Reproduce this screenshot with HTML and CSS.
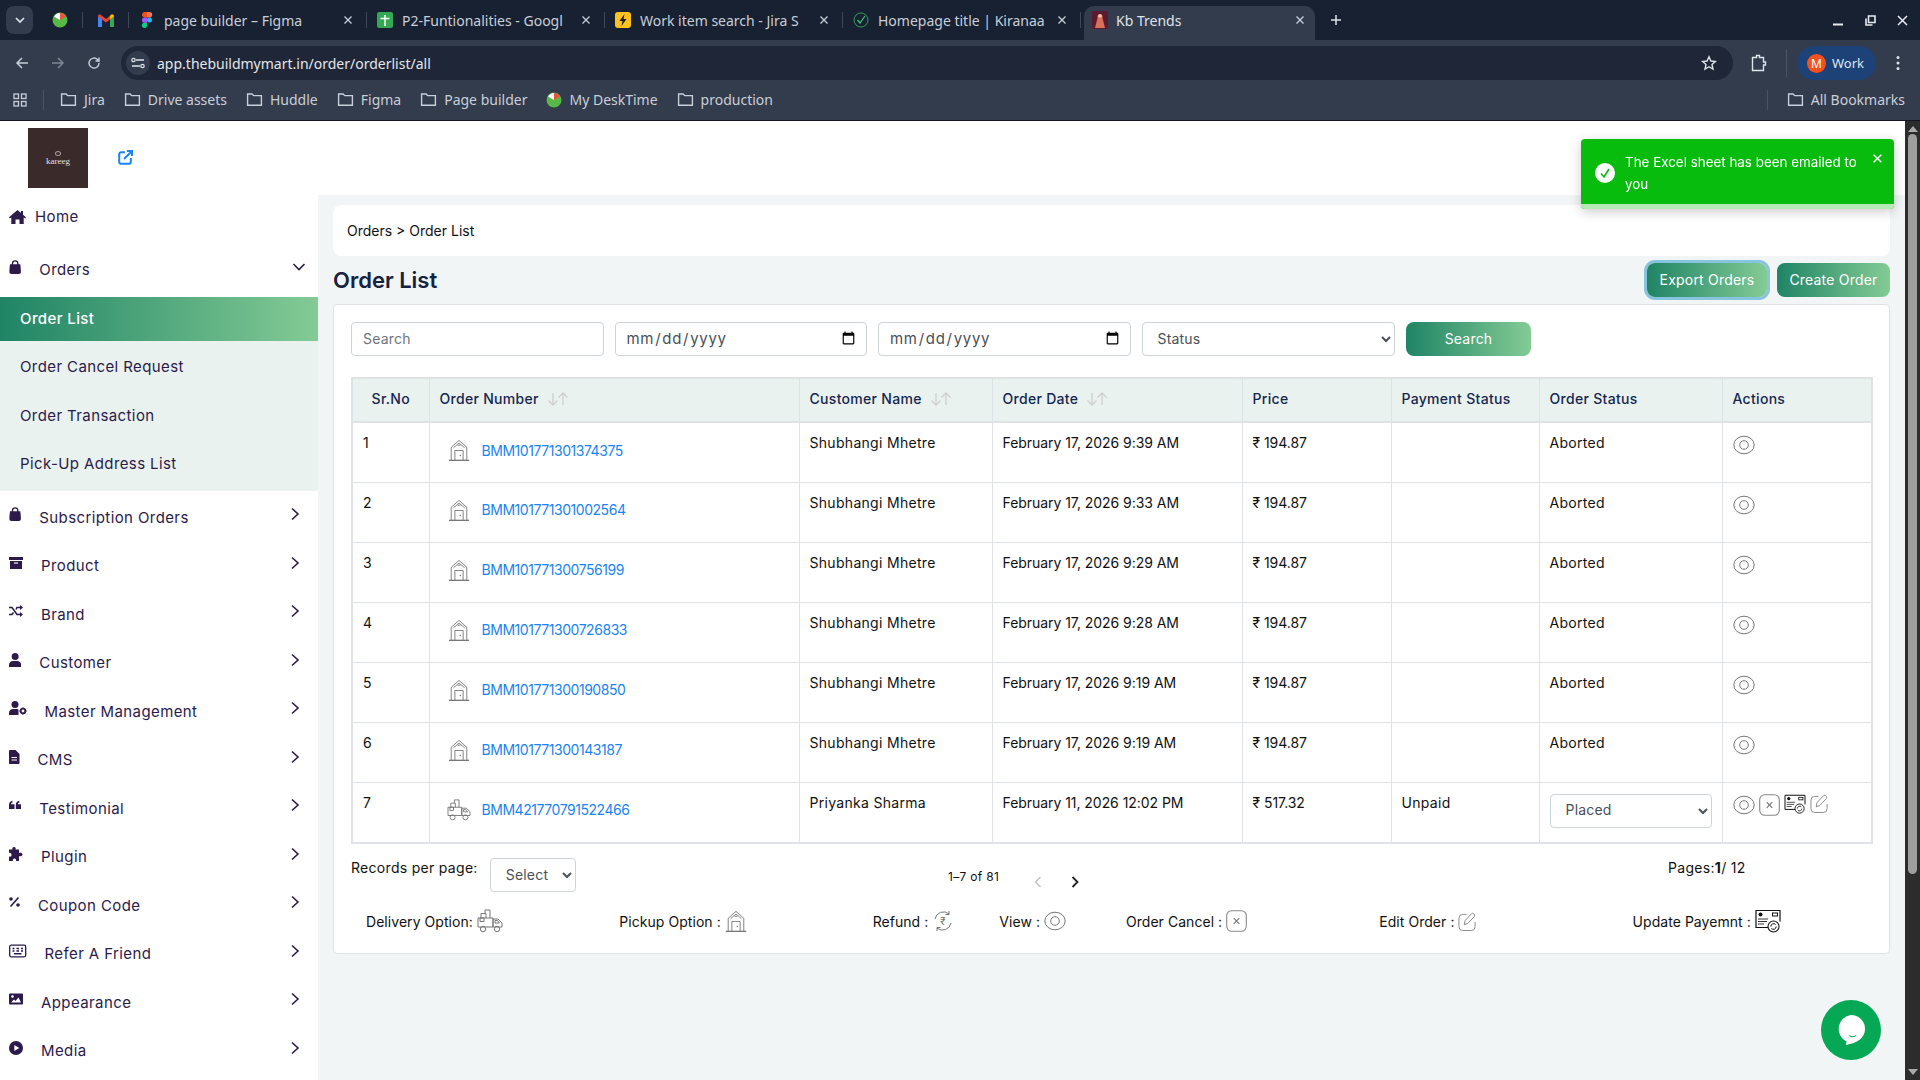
FILE: index.html
```html
<!DOCTYPE html>
<html>
<head>
    <meta charset="UTF-8">
    <title>Kb Trends</title>
    <link rel="stylesheet" href="styles.css">
</head>
<body>
    <!-- shared icons -->
    <svg class="icon-defs" xmlns="http://www.w3.org/2000/svg">
        <symbol id="i-folder" viewBox="0 0 16 16"><path d="M1.500 2.800h4.200l1.600 1.600h7.200v9h-13z" fill="none" stroke="currentColor" stroke-width="1.300"/></symbol>
        <symbol id="i-desktime" viewBox="0 0 16 16"><circle cx="8" cy="8" r="7.500" fill="#58b947"/><path d="M8 8V1a7 7 0 0 1 6 3.500z" fill="#e8553f"/><path d="M8 8V1a7 7 0 0 0-6 3.500z" fill="#fff"/></symbol>
        <symbol id="i-close" viewBox="0 0 10 10"><path d="M1.500 1.500l7 7M8.500 1.500l-7 7" stroke="currentColor" stroke-width="1.300" fill="none"/></symbol>
        <symbol id="i-right" viewBox="0 0 10 14"><path d="M2 1.500L8 7l-6 5.500" fill="none" stroke="currentColor" stroke-width="1.600"/></symbol>
        <symbol id="i-bag" viewBox="0 0 12.300 14"><path d="M3.500 5V3.500a2.650 2.650 0 0 1 5.300 0V5" fill="none" stroke="currentColor" stroke-width="1.300"/><path d="M1 4.300h10.300c.4 3 .6 5.500.6 7.700 0 1.300-.8 2-2 2H2.400c-1.200 0-2-.7-2-2 0-2.200.2-4.700.6-7.700z" fill="currentColor"/></symbol>
        <symbol id="i-house" viewBox="0 0 24 24"><g fill="none" stroke="#777" stroke-width="1"><path d="M3.500 23V9L12 1.500 20.500 9v14"/><path d="M6 9.500l6-5 6 5M10.500 6.800h3"/><path d="M7.500 23V12.500h9V23"/><path d="M1 23.300h22" stroke-width="1.500"/></g><circle cx="13.500" cy="18" r=".8" fill="#777"/></symbol>
        <symbol id="i-truck" viewBox="0 0 26 24"><g fill="none" stroke="#777" stroke-width="1"><path d="M1 9h15v9H1zM16 10h5l4 4v4h-9z"/><path d="M4 9V4.500h5V9M8 4.500V1h5v8M3 9h4v3.500H3z"/><path d="M18 11.500h2.500l2 2.500H18z"/><circle cx="6" cy="20" r="2.700"/><circle cx="20" cy="20" r="2.700"/></g></symbol>
        <symbol id="i-eye" viewBox="0 0 22 22"><ellipse cx="11" cy="11" rx="10.200" ry="8.800" fill="none" stroke="#777" stroke-width="1"/><circle cx="11" cy="11" r="4.300" fill="none" stroke="#777" stroke-width="1"/></symbol>
        <symbol id="i-cancel" viewBox="0 0 21 22"><rect x=".7" y=".7" width="19.600" height="20.600" rx="5" fill="none" stroke="#888" stroke-width="1.100"/><path d="M7.700 8.200l5.600 5.600M13.300 8.200l-5.600 5.600" stroke="#777" stroke-width="1.200"/></symbol>
        <symbol id="i-edit" viewBox="0 0 20 20"><path d="M9 2.500H5A4 4 0 0 0 1 6.500v9a4 4 0 0 0 4 4h9a4 4 0 0 0 4-4v-5" fill="none" stroke="#888" stroke-width="1"/><path d="M6.500 13.500l1-4.500 7-7.500c1-1 3.800 1.300 3 3l-7.200 7.500z" fill="none" stroke="#888" stroke-width="1"/></symbol>
        <symbol id="i-card" viewBox="0 0 26 24"><path d="M17 18.500H1V1.500h24v11" fill="none" stroke="#111" stroke-width="1.200"/><circle cx="5.500" cy="5.500" r="2" fill="#111"/><rect x="17.500" y="4" width="5" height="3" fill="none" stroke="#111"/><path d="M3 10h10M3 12.500h9M3 15h6" stroke="#333"/><circle cx="18.500" cy="17.500" r="5.500" fill="#fff" stroke="#111" stroke-width="1.100"/><path d="M15.800 17.500a2.800 2.800 0 0 1 4.800-2M21.200 17.500a2.800 2.800 0 0 1-4.800 2" fill="none" stroke="#111"/></symbol>
        <symbol id="i-sort" viewBox="0 0 22 14"><path d="M6 1v12M1.500 8.500L6 13l4.500-4.500M16 13V1M11.500 5.500L16 1l4.500 4.500" fill="none" stroke="#cfcfcf" stroke-width="1.300"/></symbol>
    </svg>

    <header class="tab-strip">
        <button class="tab-search"><svg width="10" height="7" viewBox="0 0 10 7"><path d="M1 1l4 4 4-4" fill="none" stroke="#dde1e8" stroke-width="1.700"/></svg></button>
        <div class="pinned-tab"><svg width="16" height="16"><use href="#i-desktime"/></svg></div>
        <div class="pinned-tab">
            <svg width="16" height="13" viewBox="0 0 16 13"><path d="M0 13V2l4 3v8z" fill="#4285f4"/><path d="M16 13V2l-4 3v8z" fill="#34a853"/><path d="M0 2.500C0 .5 2 0 3 1l5 4 5-4c1-1 3-.5 3 1.500L12 5.500 8 8.500 4 5.500z" fill="#ea4335"/><path d="M12 5.500l4-3C16 .5 14 0 13 1l-1 .8z" fill="#fbbc04"/></svg>
        </div>
        <div class="tab">
            <svg width="16" height="16" viewBox="-3 0 16 16"><circle cx="7.500" cy="8" r="2.500" fill="#1abcfe"/><path d="M2.500 16a2.500 2.500 0 0 0 2.500-2.500v-2.800H2.500a2.600 2.600 0 0 0 0 5.300z" fill="#0acf83"/><path d="M0 8a2.500 2.500 0 0 1 2.500-2.600H5v5.300H2.500A2.500 2.500 0 0 1 0 8z" fill="#a259ff"/><path d="M0 2.600A2.600 2.600 0 0 1 2.500 0H5v5.400H2.500A2.600 2.600 0 0 1 0 2.600z" fill="#f24e1e"/><path d="M5 0h2.500a2.700 2.700 0 0 1 0 5.400H5z" fill="#ff7262"/></svg>
            <span class="tab-title">page builder – Figma</span>
            <svg class="tab-close" width="10" height="10"><use href="#i-close"/></svg>
        </div>
        <div class="tab">
            <svg width="16" height="16" viewBox="0 0 16 16"><rect width="16" height="16" rx="2" fill="#34a853"/><path d="M8 3v11M3.500 6.500h9" stroke="#fff" stroke-width="1.500"/></svg>
            <span class="tab-title">P2-Funtionalities - Googl</span>
            <svg class="tab-close" width="10" height="10"><use href="#i-close"/></svg>
        </div>
        <div class="tab">
            <svg width="16" height="16" viewBox="0 0 16 16"><rect width="16" height="16" rx="3" fill="#fdc21c"/><path d="M9.500 2L4.500 9h3l-1 5 5-7h-3z" fill="#1c1c1c"/></svg>
            <span class="tab-title">Work item search - Jira S</span>
            <svg class="tab-close" width="10" height="10"><use href="#i-close"/></svg>
        </div>
        <div class="tab">
            <svg width="16" height="16" viewBox="0 0 16 16"><circle cx="8" cy="8" r="7" fill="none" stroke="#2f9e5d" stroke-width="1"/><path d="M4.500 8l2.500 3 5-7" fill="none" stroke="#46c07a" stroke-width="1.200"/></svg>
            <span class="tab-title">Homepage title | Kiranaa</span>
            <svg class="tab-close" width="10" height="10"><use href="#i-close"/></svg>
        </div>
        <div class="tab tab-active">
            <svg width="16" height="18" viewBox="0 0 16 18"><rect width="16" height="18" fill="#5a1a30"/><path d="M8 3c2 0 3 2 2.500 4L13 17H3l2.500-10C5 5 6 3 8 3z" fill="#d8705a"/><circle cx="8" cy="5" r="1.800" fill="#f0c8a0"/></svg>
            <span class="tab-title">Kb Trends</span>
            <svg class="tab-close" width="10" height="10"><use href="#i-close"/></svg>
        </div>
        <svg class="new-tab" width="12" height="12" viewBox="0 0 12 12"><path d="M6 1v10M1 6h10" stroke="#dde1e8" stroke-width="1.500"/></svg>
        <div class="window-controls">
            <svg width="11" height="11" viewBox="0 0 11 11"><path d="M0 9.500h10" stroke="#e8eaf0" stroke-width="2"/></svg>
            <svg width="11" height="11" viewBox="0 0 11 11"><path d="M3.500 1h6.500v6.500H3.500zM1 3.500V10h6.500" fill="none" stroke="#e8eaf0" stroke-width="1.600"/></svg>
            <svg width="11" height="11" viewBox="0 0 11 11"><path d="M1 1l9 9M10 1l-9 9" stroke="#e8eaf0" stroke-width="1.500"/></svg>
        </div>
    </header>

    <div class="toolbar">
        <svg class="nav-icon" width="14" height="14" viewBox="0 0 14 14"><path d="M13 7H2M7 2L2 7l5 5" fill="none" stroke="#c7ccd6" stroke-width="1.500"/></svg>
        <svg class="nav-icon" width="14" height="14" viewBox="0 0 14 14"><path d="M1 7h11M7 2l5 5-5 5" fill="none" stroke="#7e8694" stroke-width="1.500"/></svg>
        <svg class="nav-icon" width="14" height="14" viewBox="0 0 14 14"><path d="M12 7a5 5 0 1 1-1.500-3.500L12 5V1.500M12 5H8.500" fill="none" stroke="#c7ccd6" stroke-width="1.400"/></svg>
        <div class="address-bar">
            <span class="site-info"><svg width="14" height="12" viewBox="0 0 14 12"><path d="M5 3h8M1 9h8" stroke="#dfe3ea" stroke-width="1.300"/><circle cx="2.500" cy="3" r="1.700" fill="none" stroke="#dfe3ea" stroke-width="1.200"/><circle cx="11.500" cy="9" r="1.700" fill="none" stroke="#dfe3ea" stroke-width="1.200"/></svg></span>
            <span class="url">app.thebuildmymart.in/order/orderlist/all</span>
            <svg class="star" width="16" height="16" viewBox="0 0 16 16"><path d="M8 1.800l1.900 4.200 4.500.5-3.400 3 1 4.500L8 11.700l-4 2.300 1-4.500-3.400-3 4.500-.5z" fill="none" stroke="#dfe3ea" stroke-width="1.400"/></svg>
        </div>
        <svg class="ext-icon" width="16" height="18" viewBox="0 0 16 18"><path d="M1.500 3.500h4V1.500h3v2h4v4.500h2v3h-2v5.500h-11z" fill="none" stroke="#dfe3ea" stroke-width="1.400"/></svg>
        <span class="toolbar-sep"></span>
        <div class="profile"><span class="avatar">M</span><span>Work</span></div>
        <svg class="dots" width="4" height="16" viewBox="0 0 4 16"><circle cx="2" cy="2.500" r="1.500" fill="#dfe3ea"/><circle cx="2" cy="8" r="1.500" fill="#dfe3ea"/><circle cx="2" cy="13.500" r="1.500" fill="#dfe3ea"/></svg>
    </div>

    <nav class="bookmarks">
        <svg width="14" height="14" viewBox="0 0 14 14"><g fill="none" stroke="#c9ced8" stroke-width="1.300"><rect x="1" y="1" width="4.500" height="4.500"/><rect x="8.500" y="1" width="4.500" height="4.500"/><rect x="1" y="8.500" width="4.500" height="4.500"/><rect x="8.500" y="8.500" width="4.500" height="4.500"/></g></svg>
        <span class="bookmark-sep"></span>
        <a class="bookmark"><svg width="17" height="17"><use href="#i-folder"/></svg>Jira</a>
        <a class="bookmark"><svg width="17" height="17"><use href="#i-folder"/></svg>Drive assets</a>
        <a class="bookmark"><svg width="17" height="17"><use href="#i-folder"/></svg>Huddle</a>
        <a class="bookmark"><svg width="17" height="17"><use href="#i-folder"/></svg>Figma</a>
        <a class="bookmark"><svg width="17" height="17"><use href="#i-folder"/></svg>Page builder</a>
        <a class="bookmark"><svg width="16" height="16"><use href="#i-desktime"/></svg>My DeskTime</a>
        <a class="bookmark"><svg width="17" height="17"><use href="#i-folder"/></svg>production</a>
        <span class="bookmark-sep bookmark-sep-right"></span>
        <a class="bookmark"><svg width="17" height="17"><use href="#i-folder"/></svg>All Bookmarks</a>
    </nav>

    <div class="browser-page">
        <div class="viewport">
            <div class="top-header">
                <div class="logo"><span class="logo-mark"></span><span class="logo-name">kareeg</span></div>
                <svg class="store-link" width="15" height="15" viewBox="0 0 15 15"><path d="M7 2.200H3A1.800 1.800 0 0 0 1.200 4v8A1.800 1.800 0 0 0 3 13.800h8a1.800 1.800 0 0 0 1.800-1.800V8" fill="none" stroke="#1a84f5" stroke-width="2"/><path d="M6 9l7.500-7.500M9 1h5v5" fill="none" stroke="#1a84f5" stroke-width="2"/></svg>
            </div>

            <div class="app-body">
                <aside class="sidebar">
                    <a class="side-item side-home">
                        <svg width="17" height="14" viewBox="0 0 17 14"><path d="M8.500 0L0 7.300l1 1.100L2.300 7.300V14h4.200V9.500h4V14h4.200V7.300L16 8.400l1-1.100-3-2.600V1h-2v2z" fill="currentColor"/></svg>
                        <span class="side-label">Home</span>
                    </a>
                    <a class="side-item side-open">
                        <svg width="12.300" height="14"><use href="#i-bag"/></svg>
                        <span class="side-label">Orders</span>
                        <svg class="side-arrow-down" width="14" height="10" viewBox="0 0 14 10"><path d="M1.500 2L7 7.500 12.500 2" fill="none" stroke="currentColor" stroke-width="1.600"/></svg>
                    </a>
                    <div class="side-sub">
                        <a class="sub-item sub-active">Order List</a>
                        <a class="sub-item sub-first">Order Cancel Request</a>
                        <a class="sub-item">Order Transaction</a>
                        <a class="sub-item sub-last">Pick-Up Address List</a>
                    </div>
                    <a class="side-item">
                        <svg width="12.300" height="14"><use href="#i-bag"/></svg>
                        <span class="side-label">Subscription Orders</span>
                        <svg class="side-arrow" width="10" height="14"><use href="#i-right"/></svg>
                    </a>
                    <a class="side-item">
                        <svg width="14" height="14" viewBox="0 0 14 14"><path d="M0 1h14v3H0zM1 5h12v8H1z" fill="currentColor"/><path d="M5 7h4" stroke="#fff" stroke-width="1.200"/></svg>
                        <span class="side-label">Product</span>
                        <svg class="side-arrow" width="10" height="14"><use href="#i-right"/></svg>
                    </a>
                    <a class="side-item">
                        <svg width="14" height="14" viewBox="0 0 14 14"><path d="M0 3.500h3l5 7h3M0 10.500h3l1.500-2M7 5.500l1-2h3" fill="none" stroke="currentColor" stroke-width="1.500"/><path d="M11 1l3 2.500L11 6zM11 8l3 2.500-3 2.500z" fill="currentColor"/></svg>
                        <span class="side-label">Brand</span>
                        <svg class="side-arrow" width="10" height="14"><use href="#i-right"/></svg>
                    </a>
                    <a class="side-item">
                        <svg width="12.300" height="14" viewBox="0 0 12.300 14"><circle cx="6.150" cy="3.500" r="3.500" fill="currentColor"/><path d="M0 14v-2c0-2.500 2-4 4-4h4.300c2 0 4 1.500 4 4v2z" fill="currentColor"/></svg>
                        <span class="side-label">Customer</span>
                        <svg class="side-arrow" width="10" height="14"><use href="#i-right"/></svg>
                    </a>
                    <a class="side-item">
                        <svg width="17.500" height="14" viewBox="0 0 17.500 14"><circle cx="6" cy="3.500" r="3.500" fill="currentColor"/><path d="M0 14v-2c0-2.500 2-4 4-4h4c1 0 1.500.5 1.500 1.500V14z" fill="currentColor"/><circle cx="14" cy="10" r="2.300" fill="none" stroke="currentColor" stroke-width="1.800"/><path d="M14 6.500v1.200M14 12.300v1.200M10.500 10h1.200M16.300 10h1.200" stroke="currentColor" stroke-width="1.300"/></svg>
                        <span class="side-label">Master Management</span>
                        <svg class="side-arrow" width="10" height="14"><use href="#i-right"/></svg>
                    </a>
                    <a class="side-item">
                        <svg width="10.500" height="14" viewBox="0 0 10.500 14"><path d="M1 0h5.500l4 4v9a1 1 0 0 1-1 1H1a1 1 0 0 1-1-1V1a1 1 0 0 1 1-1z" fill="currentColor"/><path d="M2.500 7.500h5.500M2.500 10h5.500" stroke="#fff" stroke-width="1"/></svg>
                        <span class="side-label">CMS</span>
                        <svg class="side-arrow" width="10" height="14"><use href="#i-right"/></svg>
                    </a>
                    <a class="side-item">
                        <svg width="12.300" height="14" viewBox="0 0 12.300 14"><path d="M0 7c0-2.500 1.500-4 3.500-4.300v1.800C2.500 4.800 2 5.500 2 6.300h3.500V11H0zM6.800 7c0-2.500 1.500-4 3.500-4.300v1.800c-1 .3-1.500 1-1.500 1.800h3.500V11H6.800z" fill="currentColor"/></svg>
                        <span class="side-label">Testimonial</span>
                        <svg class="side-arrow" width="10" height="14"><use href="#i-right"/></svg>
                    </a>
                    <a class="side-item">
                        <svg width="14" height="14" viewBox="0 0 14 14"><path d="M5 0c1.500 0 2 1 1.500 2.500H10V6c1.500-.5 3.500-.2 3.500 1.500S11.500 9.500 10 9v5H7c.5-1.500-.3-2.500-1.500-2.500S3.500 12.500 4 14H0V9.500c1.500.5 2.500 0 2.500-1.500S1.500 5.500 0 6V2.500h3.500C3 1 3.500 0 5 0z" fill="currentColor"/></svg>
                        <span class="side-label">Plugin</span>
                        <svg class="side-arrow" width="10" height="14"><use href="#i-right"/></svg>
                    </a>
                    <a class="side-item">
                        <svg width="11" height="14" viewBox="0 0 11 14"><path d="M9.500 2.500L1.500 11.500" stroke="currentColor" stroke-width="1.600"/><circle cx="2" cy="4" r="1.800" fill="currentColor"/><circle cx="9" cy="10" r="1.800" fill="currentColor"/></svg>
                        <span class="side-label">Coupon Code</span>
                        <svg class="side-arrow" width="10" height="14"><use href="#i-right"/></svg>
                    </a>
                    <a class="side-item">
                        <svg width="17.500" height="14" viewBox="0 0 17.500 14"><rect x=".7" y="1.200" width="16" height="11.600" rx="1.500" fill="none" stroke="currentColor" stroke-width="1.300"/><path d="M3.500 4.500h2M7.500 4.500h2.500M12 4.500h2M3.500 7h2M7.500 7h2.500M12 7h2M5 9.800h7.500" stroke="currentColor" stroke-width="1.400"/></svg>
                        <span class="side-label">Refer A Friend</span>
                        <svg class="side-arrow" width="10" height="14"><use href="#i-right"/></svg>
                    </a>
                    <a class="side-item">
                        <svg width="14" height="14" viewBox="0 0 14 14"><path d="M1 1.500h12a1 1 0 0 1 1 1v9a1 1 0 0 1-1 1H1a1 1 0 0 1-1-1v-9a1 1 0 0 1 1-1z" fill="currentColor"/><circle cx="3.500" cy="4.500" r="1.300" fill="#fff"/><path d="M2 10.500l3-3 1.500 1.500 3-3.500 2.500 5z" fill="#fff"/></svg>
                        <span class="side-label">Appearance</span>
                        <svg class="side-arrow" width="10" height="14"><use href="#i-right"/></svg>
                    </a>
                    <a class="side-item">
                        <svg width="14" height="14" viewBox="0 0 14 14"><circle cx="7" cy="7" r="7" fill="currentColor"/><path d="M5.300 4l5 3-5 3z" fill="#fff"/></svg>
                        <span class="side-label">Media</span>
                        <svg class="side-arrow" width="10" height="14"><use href="#i-right"/></svg>
                    </a>
                </aside>

                <main class="content">
                    <div class="breadcrumb">Orders &gt; Order List</div>
                    <div class="title-row">
                        <h1 class="page-title">Order List</h1>
                        <button class="btn-green btn-focus">Export Orders</button>
                        <button class="btn-green">Create Order</button>
                    </div>

                    <section class="card">
                        <div class="filters">
                            <input class="field" type="text" placeholder="Search">
                            <input class="field field-date" type="date">
                            <input class="field field-date" type="date">
                            <select class="field"><option>Status</option></select>
                            <button class="btn-green btn-search">Search</button>
                        </div>

                        <table class="orders">
                            <colgroup>
                                <col class="col-sr"><col class="col-num"><col class="col-name"><col class="col-date">
                                <col class="col-price"><col class="col-pay"><col class="col-status"><col class="col-actions">
                            </colgroup>
                            <thead>
                                <tr>
                                    <th class="center">Sr.No</th>
                                    <th>Order Number <svg class="sort" width="22" height="14"><use href="#i-sort"/></svg></th>
                                    <th>Customer Name <svg class="sort" width="22" height="14"><use href="#i-sort"/></svg></th>
                                    <th>Order Date <svg class="sort" width="22" height="14"><use href="#i-sort"/></svg></th>
                                    <th>Price</th>
                                    <th>Payment Status</th>
                                    <th>Order Status</th>
                                    <th>Actions</th>
                                </tr>
                            </thead>
                            <tbody>
                                <tr>
                                    <td>1</td>
                                    <td><div class="order-no"><svg width="24" height="22"><use href="#i-house"/></svg><a>BMM101771301374375</a></div></td>
                                    <td>Shubhangi Mhetre</td><td class="num">February 17, 2026 9:39 AM</td><td class="num">₹ 194.87</td><td></td><td>Aborted</td>
                                    <td><div class="actions"><svg width="22" height="22"><use href="#i-eye"/></svg></div></td>
                                </tr>
                                <tr>
                                    <td>2</td>
                                    <td><div class="order-no"><svg width="24" height="22"><use href="#i-house"/></svg><a>BMM101771301002564</a></div></td>
                                    <td>Shubhangi Mhetre</td><td class="num">February 17, 2026 9:33 AM</td><td class="num">₹ 194.87</td><td></td><td>Aborted</td>
                                    <td><div class="actions"><svg width="22" height="22"><use href="#i-eye"/></svg></div></td>
                                </tr>
                                <tr>
                                    <td>3</td>
                                    <td><div class="order-no"><svg width="24" height="22"><use href="#i-house"/></svg><a>BMM101771300756199</a></div></td>
                                    <td>Shubhangi Mhetre</td><td class="num">February 17, 2026 9:29 AM</td><td class="num">₹ 194.87</td><td></td><td>Aborted</td>
                                    <td><div class="actions"><svg width="22" height="22"><use href="#i-eye"/></svg></div></td>
                                </tr>
                                <tr>
                                    <td>4</td>
                                    <td><div class="order-no"><svg width="24" height="22"><use href="#i-house"/></svg><a>BMM101771300726833</a></div></td>
                                    <td>Shubhangi Mhetre</td><td class="num">February 17, 2026 9:28 AM</td><td class="num">₹ 194.87</td><td></td><td>Aborted</td>
                                    <td><div class="actions"><svg width="22" height="22"><use href="#i-eye"/></svg></div></td>
                                </tr>
                                <tr>
                                    <td>5</td>
                                    <td><div class="order-no"><svg width="24" height="22"><use href="#i-house"/></svg><a>BMM101771300190850</a></div></td>
                                    <td>Shubhangi Mhetre</td><td class="num">February 17, 2026 9:19 AM</td><td class="num">₹ 194.87</td><td></td><td>Aborted</td>
                                    <td><div class="actions"><svg width="22" height="22"><use href="#i-eye"/></svg></div></td>
                                </tr>
                                <tr>
                                    <td>6</td>
                                    <td><div class="order-no"><svg width="24" height="22"><use href="#i-house"/></svg><a>BMM101771300143187</a></div></td>
                                    <td>Shubhangi Mhetre</td><td class="num">February 17, 2026 9:19 AM</td><td class="num">₹ 194.87</td><td></td><td>Aborted</td>
                                    <td><div class="actions"><svg width="22" height="22"><use href="#i-eye"/></svg></div></td>
                                </tr>
                                <tr>
                                    <td>7</td>
                                    <td><div class="order-no"><svg width="24" height="22"><use href="#i-truck"/></svg><a>BMM421770791522466</a></div></td>
                                    <td>Priyanka Sharma</td><td class="num">February 11, 2026 12:02 PM</td><td class="num">₹ 517.32</td><td>Unpaid</td>
                                    <td><select class="field"><option>Placed</option></select></td>
                                    <td><div class="actions">
                                        <svg width="22" height="22"><use href="#i-eye"/></svg>
                                        <svg width="21" height="22"><use href="#i-cancel"/></svg>
                                        <svg width="22" height="20"><use href="#i-card"/></svg>
                                        <svg width="19" height="19"><use href="#i-edit"/></svg>
                                    </div></td>
                                </tr>
                            </tbody>
                        </table>

                        <div class="pager">
                            <div class="per-page">
                                <span>Records per page:</span>
                                <select class="field select-small"><option>Select</option></select>
                            </div>
                            <div class="range">
                                <span>1–7 of 81</span>
                                <svg class="page-prev" width="8" height="12" viewBox="0 0 8 12"><path d="M6.500 1L1.500 6l5 5" fill="none" stroke="#c4c4c4" stroke-width="1.500"/></svg>
                                <svg class="page-next" width="8" height="12" viewBox="0 0 8 12"><path d="M1.500 1l5 5-5 5" fill="none" stroke="#222" stroke-width="1.800"/></svg>
                            </div>
                            <div class="page-count">Pages:<b>1</b>/ 12</div>
                        </div>

                        <div class="legend">
                            <div class="legend-item span-2">Delivery Option: <svg width="26" height="24"><use href="#i-truck"/></svg></div>
                            <div class="legend-item span-2">Pickup Option : <svg width="22" height="22"><use href="#i-house"/></svg></div>
                            <div class="legend-item">Refund : <svg width="22" height="22" viewBox="0 0 22 22"><path d="M3 9a8.500 8.500 0 0 1 14-5M19 13a8.500 8.500 0 0 1-14 5" fill="none" stroke="#777" stroke-width="1"/><path d="M17 1v3.500h-3.500M5 21v-3.500h3.500" fill="none" stroke="#777"/><text x="11" y="15" text-anchor="middle" class="rupee">₹</text></svg></div>
                            <div class="legend-item">View : <svg width="22" height="22"><use href="#i-eye"/></svg></div>
                            <div class="legend-item span-2">Order Cancel : <svg width="21" height="22"><use href="#i-cancel"/></svg></div>
                            <div class="legend-item span-2">Edit Order : <svg width="19" height="19"><use href="#i-edit"/></svg></div>
                            <div class="legend-item span-2">Update Payemnt : <svg width="26" height="24"><use href="#i-card"/></svg></div>
                        </div>
                    </section>
                </main>
            </div>
        </div>

        <div class="scrollbar">
            <span class="scroll-up"></span>
            <span class="scroll-thumb"></span>
            <span class="scroll-down"></span>
        </div>
    </div>

    <!-- toast -->
    <div class="toast">
        <span class="toast-check"><svg width="12" height="12" viewBox="0 0 12 12"><path d="M2 6.500l3 3.500 5-8" fill="none" stroke="#07bc0c" stroke-width="1.600"/></svg></span>
        <p class="toast-text">The Excel sheet has been emailed to you</p>
        <svg class="toast-close" width="11" height="11"><use href="#i-close"/></svg>
        <span class="toast-progress"></span>
    </div>

    <!-- chat -->
    <div class="chat-button">
        <svg width="30" height="32" viewBox="0 0 30 32"><path d="M15 1a14 14 0 0 1 14 14c0 9-8 14-19 16l.5-3.500A14 14 0 0 1 15 1z" fill="#fff"/><path d="M12.500 21c2.500 1.500 5.500 1.500 8 0-1 3-7 3-8 0z" fill="#07a855"/></svg>
    </div>
</body>
</html>
```

FILE: styles.css
```css
:root {
    --app-font: Inter, "Noto Sans", sans-serif;
    --chrome-font: "Noto Sans", "Open Sans", sans-serif;
    --green-grad: linear-gradient(90deg, #1f8465, #84cb95);
    --ink: #2c1a4a;
}

* {
    margin: 0;
    padding: 0;
    box-sizing: border-box;
}

body {
    width: 1920px;
    height: 1080px;
    overflow: hidden;
    display: flex;
    flex-direction: column;
    font-family: var(--app-font);
    font-size: 14px;
    background: #fff;
    color: #111;
}

.icon-defs {
    display: none;
}

/* browser chrome */
.tab-strip {
    height: 40px;
    flex: none;
    display: flex;
    align-items: flex-end;
    padding-left: 6px;
    background: #182132;
    font-family: var(--chrome-font);
    font-size: 14px;
    color: #c9ced8;
}

.tab-search {
    width: 27px;
    height: 28px;
    margin-bottom: 6px;
    border: none;
    border-radius: 8px;
    background: #333c4d;
    display: flex;
    align-items: center;
    justify-content: center;
}

.pinned-tab {
    width: 46px;
    height: 40px;
    display: flex;
    align-items: center;
    justify-content: center;
    background: linear-gradient(#3f4859, #3f4859) right center / 1px 16px no-repeat;
}

.pinned-tab:first-of-type {
    margin-left: 4px;
}

.pinned-tab svg {
    display: block;
}

.tab {
    width: 238px;
    height: 40px;
    display: flex;
    align-items: center;
    gap: 9px;
    padding: 0 14px 0 10px;
    background: linear-gradient(#3f4859, #3f4859) right center / 1px 16px no-repeat;
}

.tab svg {
    flex: none;
}

.tab-title {
    flex: 1;
    white-space: nowrap;
    overflow: hidden;
}

.tab-close {
    color: #c9ced8;
}

.tab-active {
    width: 231px;
    height: 34px;
    margin-left: 3px;
    gap: 8px;
    border-radius: 10px 10px 0 0;
    background: #333c4d;
    color: #dfe3ea;
    padding: 0 10px 6px 8px;
}

.new-tab {
    margin: 0 0 14px 15px;
}

.window-controls {
    margin-left: auto;
    height: 40px;
    display: flex;
    align-items: center;
    gap: 21px;
    padding-right: 12px;
}

.toolbar {
    height: 44px;
    flex: none;
    display: flex;
    align-items: center;
    padding: 6px 0 4px 15px;
    background: #333c4d;
    font-family: var(--chrome-font);
}

.nav-icon {
    margin-right: 22px;
    flex: none;
}

.address-bar {
    width: 1612px;
    height: 34px;
    margin-left: -2px;
    display: flex;
    align-items: center;
    border-radius: 17px;
    background: #1e2638;
    color: #e3e6ec;
    font-size: 14px;
}

.site-info {
    width: 24px;
    height: 24px;
    margin-left: 5px;
    border-radius: 50%;
    background: #333c4d;
    display: flex;
    align-items: center;
    justify-content: center;
}

.url {
    margin-left: 7px;
}

.star {
    margin-left: auto;
    margin-right: 16px;
}

.ext-icon {
    margin-left: 18px;
    flex: none;
}

.toolbar-sep {
    width: 1px;
    height: 28px;
    margin: 0 10px 0 19px;
    background: #4a5365;
}

.profile {
    width: 79px;
    height: 34px;
    display: flex;
    align-items: center;
    gap: 6px;
    padding-left: 10px;
    border-radius: 17px;
    background: #1c4278;
    color: #dfe6f2;
    font-size: 13px;
}

.avatar {
    width: 19px;
    height: 19px;
    border-radius: 50%;
    background: #f4511e;
    color: #fff;
    font-size: 12px;
    text-align: center;
    line-height: 19px;
}

.dots {
    margin-left: 20px;
}

.bookmarks {
    height: 37px;
    flex: none;
    display: flex;
    align-items: center;
    gap: 19px;
    padding: 0 15px 5px 13px;
    background: #333c4d;
    border-bottom: 1px solid #12161f;
    font-family: var(--chrome-font);
    font-size: 14px;
    color: #c9ced8;
}

.bookmark {
    display: flex;
    align-items: center;
    gap: 7px;
    white-space: nowrap;
}

.bookmarks > svg {
    margin-right: -3px;
}

.bookmark-sep {
    width: 1px;
    height: 20px;
    margin-right: -3px;
    background: #4a5365;
}

.bookmark-sep-right {
    margin-left: auto;
    margin-right: 0;
}

/* page */
.browser-page {
    flex: 1;
    min-height: 0;
    display: flex;
}

.viewport {
    flex: 1;
    display: flex;
    flex-direction: column;
    min-width: 0;
}

.top-header {
    height: 74px;
    flex: none;
    display: flex;
    align-items: flex-start;
    padding: 7px 0 0 28px;
    background: #fff;
}

.logo {
    width: 60px;
    height: 60px;
    display: flex;
    flex-direction: column;
    align-items: center;
    justify-content: center;
    background: #3b2a2a;
}

.logo-mark {
    width: 6px;
    height: 5px;
    border: 1px solid #a89a94;
    border-radius: 50%;
}

.logo-name {
    font-family: "Liberation Serif", serif;
    font-size: 9px;
    color: #e8e0da;
}

.store-link {
    margin: 22px 0 0 30px;
}

.app-body {
    flex: 1;
    min-height: 0;
    display: flex;
}

/* sidebar */
.sidebar {
    width: 318px;
    flex: none;
    overflow: hidden;
    background: #fff;
    color: var(--ink);
    font-size: 15px;
}

.side-item {
    height: 48.5px;
    display: flex;
    align-items: center;
    gap: 18px;
    padding: 0 18px 0 9px;
}

.side-item > svg {
    flex: none;
    margin-top: -6px;
}

.side-label {
    letter-spacing: .4px;
}

.side-arrow {
    margin-left: auto;
}

.side-home {
    height: 44px;
    gap: 9px;
    padding-bottom: 1px;
}

.side-home > svg {
    margin-top: 0;
}

.side-open {
    height: 58px;
    padding-right: 12px;
    padding-top: 3px;
}

.side-arrow-down {
    margin-left: auto;
}

.side-sub {
    margin-bottom: 2px;
    background: #e9f2ef;
}

.sub-item {
    height: 49px;
    display: flex;
    align-items: center;
    padding-left: 20px;
    letter-spacing: .4px;
}

.sub-first {
    height: 50px;
}

.sub-last {
    height: 51px;
    padding-bottom: 5px;
}

.sub-active {
    height: 44px;
    padding-bottom: 2px;
    background: var(--green-grad);
    color: #fff;
    font-weight: 500;
}

/* main content */
.content {
    flex: 1;
    min-width: 0;
    padding: 10px 15px 0;
    background: #f1f5f6;
}

.breadcrumb {
    height: 51px;
    display: flex;
    align-items: center;
    padding: 0 0 1px 14px;
    border-radius: 8px;
    background: #fff;
}

.title-row {
    height: 48px;
    display: flex;
    align-items: center;
    gap: 10px;
}

.page-title {
    margin-right: auto;
    font-size: 22px;
    font-weight: 600;
    color: #16223f;
}

.btn-green {
    height: 34px;
    padding: 0 12.5px 2px;
    border: none;
    border-radius: 8px;
    background: var(--green-grad);
    color: #fff;
    font-family: var(--app-font);
    font-size: 14px;
    letter-spacing: .2px;
}

.btn-focus {
    box-shadow: 0 0 0 3px #86c5dd;
}

.card {
    height: 650px;
    padding: 17px 17px 0;
    border: 1px solid #dee2e6;
    border-radius: 4px;
    background: #fff;
}

.filters {
    display: grid;
    grid-template-columns: 252.5px 252.5px 252.5px 253.5px 125px;
    column-gap: 11px;
}

.field {
    height: 34px;
    width: 100%;
    padding: 0 11px 2px;
    border: 1px solid #ced4da;
    border-radius: 4px;
    background-color: #fff;
    font-family: var(--app-font);
    font-size: 14px;
    color: #495057;
    letter-spacing: .2px;
}

.field::placeholder {
    color: #6c757d;
}

.field-date {
    padding: 0 8px 2px 10px;
    font-size: 15px;
    letter-spacing: .7px;
}

.btn-search {
    width: 125px;
}

/* orders table */
.orders {
    width: 1520px;
    margin-top: 21px;
    table-layout: fixed;
    border-collapse: collapse;
    border: 2px solid #dee2e6;
    letter-spacing: .3px;
}

.col-sr { width: 77px; }
.col-num { width: 370px; }
.col-name { width: 193px; }
.col-date { width: 250px; }
.col-price { width: 149px; }
.col-pay { width: 148px; }
.col-status { width: 183px; }
.col-actions { width: 150px; }

.orders th,
.orders td {
    border: 1px solid #dee2e6;
    text-align: left;
    padding: 11px 10px 10px;
    vertical-align: top;
}

.orders th {
    height: 44px;
    padding: 7px 10px 10px;
    vertical-align: middle;
    border-bottom-width: 2px;
    background: #e9f2ef;
    color: #16264f;
    font-weight: 500;
    white-space: nowrap;
}

.orders td {
    height: 60px;
}

.orders tr:last-child td {
    height: 61px;
}

.orders th.center {
    text-align: center;
}

.orders td.num {
    letter-spacing: -.05px;
}

.sort {
    vertical-align: -2px;
    margin-left: 4px;
}

.order-no {
    display: flex;
    align-items: center;
    gap: 11px;
    padding: 5px 0 0 7px;
}

.order-no svg {
    flex: none;
}

.order-no a {
    color: #1a84f5;
    letter-spacing: -.45px;
}

.actions {
    display: flex;
    align-items: flex-start;
    gap: 4px;
}

.actions svg {
    flex: none;
}

/* pager */
.pager {
    display: grid;
    grid-template-columns: 597px 720px auto;
    margin-top: 14px;
    letter-spacing: .3px;
}

.per-page {
    display: flex;
    align-items: flex-start;
    gap: 12px;
}

.per-page span {
    padding-top: 1px;
}

.select-small {
    width: 86px;
}

.range {
    display: flex;
    align-items: center;
    height: 34px;
    font-size: 12px;
    padding-top: 2px;
}

.page-prev {
    margin: 12px 0 0 35px;
}

.page-next {
    margin: 12px 0 0 29px;
}

.page-count {
    padding-top: 1px;
}

.legend {
    display: grid;
    grid-template-columns: repeat(12, 126.67px);
    margin: 16px 0 0 15px;
    letter-spacing: .05px;
}

.legend-item {
    display: flex;
    align-items: center;
    height: 26px;
    white-space: pre;
}

.span-2 {
    grid-column: span 2;
}

.rupee {
    font-size: 10px;
    fill: #777;
}

/* fake window scrollbar */
.scrollbar {
    width: 15px;
    flex: none;
    display: flex;
    flex-direction: column;
    align-items: center;
    background: #2c2c2c;
}

.scroll-up {
    margin-top: 5px;
    border: 5px solid transparent;
    border-top: none;
    border-bottom: 6px solid #aaa;
}

.scroll-thumb {
    width: 9px;
    height: 740px;
    margin-top: 2px;
    border-radius: 5px;
    background: #9e9e9e;
}

.scroll-down {
    margin-top: auto;
    margin-bottom: 5px;
    border: 5px solid transparent;
    border-bottom: none;
    border-top: 6px solid #aaa;
}

/* toast */
.toast {
    position: fixed;
    top: 139px;
    left: 1581px;
    width: 313px;
    height: 70px;
    display: flex;
    align-items: center;
    padding: 0 8px 3px 14px;
    border-radius: 4px;
    background: #07bc0c;
    color: #fff;
    box-shadow: 0 3px 12px rgba(0, 0, 0, 0.2);
    overflow: hidden;
}

.toast-check {
    width: 20px;
    height: 20px;
    flex: none;
    display: flex;
    align-items: center;
    justify-content: center;
    border-radius: 50%;
    background: #fff;
}

.toast-text {
    margin-left: 10px;
    width: 235px;
    line-height: 22px;
    font-size: 13.4px;
}

.toast-close {
    position: absolute;
    top: 14px;
    right: 11px;
}

.toast-progress {
    position: absolute;
    left: 0;
    right: 0;
    bottom: 0;
    height: 5px;
    background: #b5eab6;
}

/* chat */
.chat-button {
    position: fixed;
    left: 1821px;
    top: 1000px;
    width: 60px;
    height: 60px;
    display: flex;
    align-items: center;
    justify-content: center;
    border-radius: 50%;
    background: #07a855;
}
```
